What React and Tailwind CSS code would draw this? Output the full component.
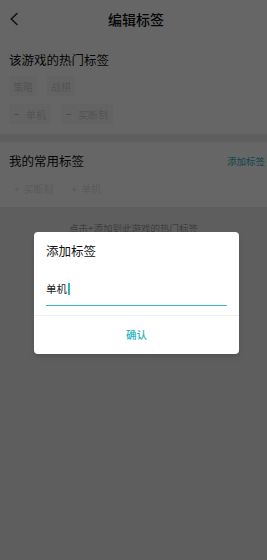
import React from 'react';

// 编辑标签 페이지 + 添加标签 다이얼로그
export default function App() {
  return (
    <div className="relative w-[267px] h-[560px] overflow-hidden bg-[#ececec] font-['Noto_Sans_CJK_SC','Noto_Sans',sans-serif]">
      {/* 헤더 */}
      <div className="relative h-[38px] bg-white flex items-center justify-center">
        <svg className="absolute left-[9px] top-[12px]" width="10" height="14" viewBox="0 0 10 14" fill="none">
          <path d="M8 1.5L2.2 7L8 12.5" stroke="#222" strokeWidth="1.4" strokeLinecap="round" strokeLinejoin="round" />
        </svg>
        <span className="text-[14px] leading-[20px] font-medium text-[#111] ml-[5px]">编辑标签</span>
      </div>

      {/* 热门标签 */}
      <div className="bg-white px-[9px] pt-[13px] pb-[10px]">
        <div className="text-[12.5px] leading-[18px] text-[#111]">该游戏的热门标签</div>
        <div className="flex gap-[6px] mt-[7px]">
          <span className="h-[20px] px-[4px] flex items-center bg-[#f8f8f8] text-[10px] text-[#d2d2d2]">策略</span>
          <span className="h-[20px] px-[4px] ml-[4px] flex items-center bg-[#f8f8f8] text-[10px] text-[#d2d2d2]">战棋</span>
        </div>
        <div className="flex gap-[10px] mt-[8px]">
          <span className="h-[20px] px-[5px] flex items-center gap-[7px] bg-[#f8f8f8] text-[10px] text-[#d2d2d2]">
            <span className="w-[5px] h-[1px] bg-[#bdbdbd]" />
            单机
          </span>
          <span className="h-[20px] px-[5px] flex items-center gap-[7px] bg-[#f8f8f8] text-[10px] text-[#d2d2d2]">
            <span className="w-[5px] h-[1px] bg-[#bdbdbd]" />
            买断制
          </span>
        </div>
      </div>

      <div className="h-[8px]" />

      {/* 常用标签 */}
      <div className="bg-white px-[9px] pt-[10px] pb-[9px]">
        <div className="flex items-center justify-between">
          <span className="text-[12.5px] leading-[18px] text-[#111]">我的常用标签</span>
          <span className="text-[9.5px] leading-[14px] text-[#1fb0bd] mr-[-7px]">添加标签</span>
        </div>
        <div className="flex gap-[8px] mt-[8px]">
          <span className="h-[20px] px-[5px] flex items-center gap-[4px] text-[10px] text-[#e2e2e2]">
            <span>+</span>买断制
          </span>
          <span className="h-[20px] px-[5px] flex items-center gap-[4px] text-[10px] text-[#e2e2e2]">
            <span>+</span>单机
          </span>
        </div>
      </div>

      <div className="pt-[14px] text-center text-[9.5px] leading-[14px] text-[#999]">
        点击+添加到此游戏的热门标签
      </div>

      {/* 오버레이 + 다이얼로그 */}
      <div className="absolute inset-0 bg-black/60 flex flex-col items-center pt-[232px]">
        <div className="w-[205px] bg-white rounded-[4px] ml-[6px] shadow-md">
          <div className="px-[12px] pt-[10px]">
            <div className="text-[12.5px] leading-[18px] text-[#111]">添加标签</div>
            <div className="mt-[22px] pb-[9px] flex items-center">
              <span className="text-[10.5px] leading-[14px] text-[#222]">单机</span>
              <span className="w-[1.5px] h-[12px] bg-[#2bb4c1] ml-[1px]" />
            </div>
            <div className="h-[1px] bg-[#3bbac6]" />
          </div>
          <div className="mt-[9px] border-t border-[#f0f0f0] h-[39px] flex items-center justify-center">
            <span className="text-[10.5px] font-medium text-[#2bb4c1]">确认</span>
          </div>
        </div>
      </div>
    </div>
  );
}
